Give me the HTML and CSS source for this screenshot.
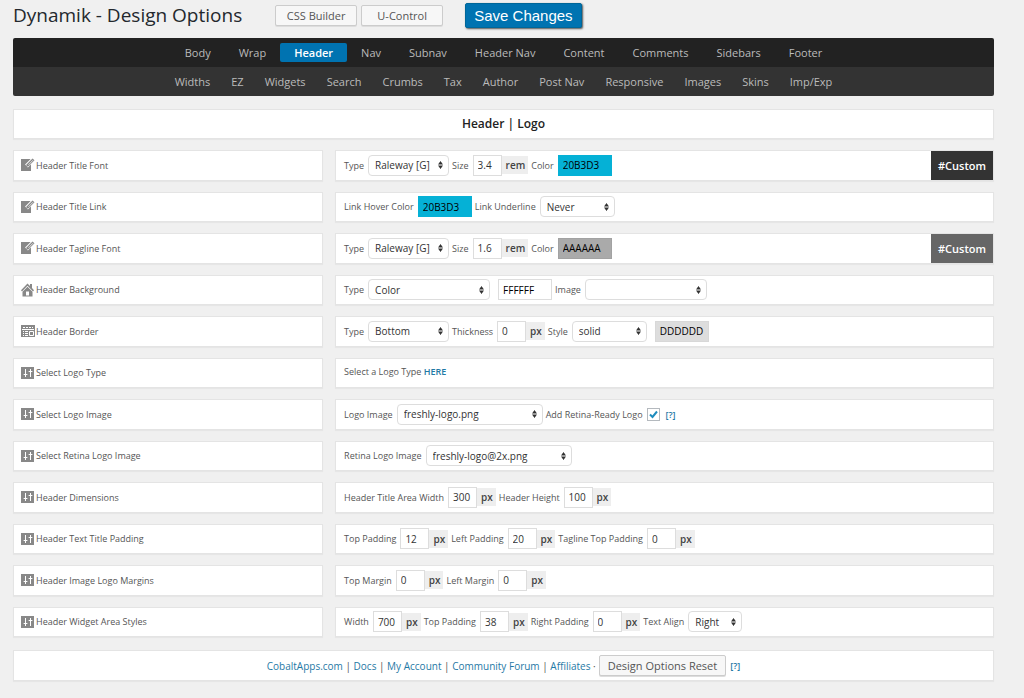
FILE: index.html
```html
<!DOCTYPE html>
<html lang="en">
<head>
    <meta charset="UTF-8">
    <meta name="viewport" content="width=device-width, initial-scale=1.0">
    <title>Dynamik - Design Options</title>
    <link rel="stylesheet" href="styles.css">
</head>
<body>

    <!-- Icons used in the option labels -->
    <svg class="icon-defs" aria-hidden="true">
        <symbol id="icon-edit" viewBox="0 0 14 14">
            <path d="M0 1h10v12H0z" />
            <path class="icon-gap" d="M5.5 8L13 0.5" />
            <path d="M5 9L5.8 6.3 11.5 0.5 13.5 2.2 7.8 8z" />
            <path class="icon-light" d="M7.5 6.8L12 2.2" />
        </symbol>
        <symbol id="icon-home" viewBox="0 0 14 14">
            <path d="M0 7.2L6.5 0.5 9 3V1h2v4L13 7.2l-1 1.2L6.5 2.8 1 8.4z" />
            <path fill-rule="evenodd" d="M6.5 3.8L11.5 8.8V13.500H1.5V8.8zM5 8.5V12.5h3V8.5z" />
        </symbol>
        <symbol id="icon-table" viewBox="0 0 14 14">
            <path d="M0 1h14v12H0z" />
            <path class="icon-line" d="M2 3.5h2M5 3.5h2M8 3.5h2M11 3.5h1M1 5.5h12M2 7.5h1M4 7.5h3M2 9.5h1M4 9.5h3M2 11.5h1M4 11.5h3M8.5 7.5h4v4h-4z" />
        </symbol>
        <symbol id="icon-sliders" viewBox="0 0 14 14">
            <path d="M0 1h13v12H0z" />
            <path class="icon-line" d="M4.5 3v8M3 8.5h3M9.5 3v8M8 5.5h3" />
            <path class="icon-light" d="M2 8.5h1M6 8.5h1M7 5.5h1M11 5.500h1" opacity=".5" />
        </symbol>
    </svg>

    <div class="page-header">
        <h1>Dynamik - Design Options</h1>
        <button type="button" class="button">CSS Builder</button>
        <button type="button" class="button">U-Control</button>
        <button type="submit" form="design-options" class="save-button">Save Changes</button>
    </div>

    <nav class="options-nav">
        <div class="nav-row nav-row-top">
            <a href="#body">Body</a>
            <a href="#wrap">Wrap</a>
            <a href="#header" class="active">Header</a>
            <a href="#nav">Nav</a>
            <a href="#subnav">Subnav</a>
            <a href="#header-nav">Header Nav</a>
            <a href="#content">Content</a>
            <a href="#comments">Comments</a>
            <a href="#sidebars">Sidebars</a>
            <a href="#footer">Footer</a>
        </div>
        <div class="nav-row nav-row-bottom">
            <a href="#widths">Widths</a>
            <a href="#ez">EZ</a>
            <a href="#widgets">Widgets</a>
            <a href="#search">Search</a>
            <a href="#crumbs">Crumbs</a>
            <a href="#tax">Tax</a>
            <a href="#author">Author</a>
            <a href="#post-nav">Post Nav</a>
            <a href="#responsive">Responsive</a>
            <a href="#images">Images</a>
            <a href="#skins">Skins</a>
            <a href="#imp-exp">Imp/Exp</a>
        </div>
    </nav>

    <h2 class="box section-title">Header | Logo</h2>

    <form id="design-options" class="options">
        <div class="option">
            <div class="box option-name"><svg class="icon"><use href="#icon-edit" /></svg>Header Title Font</div>
            <div class="box option-fields">
                <label for="title-type">Type</label>
                <select id="title-type" class="select-small"><option>Raleway [G]</option></select>
                <label for="title-size">Size</label>
                <span class="unit-field"><input type="text" id="title-size" class="number" value="3.4"><span class="unit">rem</span></span>
                <label for="title-color">Color</label>
                <input type="text" id="title-color" class="color color-blue" value="20B3D3">
                <button type="button" class="custom-button">#Custom</button>
            </div>
        </div>

        <div class="option">
            <div class="box option-name"><svg class="icon"><use href="#icon-edit" /></svg>Header Title Link</div>
            <div class="box option-fields">
                <label for="link-color">Link Hover Color</label>
                <input type="text" id="link-color" class="color color-blue" value="20B3D3">
                <label for="link-underline">Link Underline</label>
                <select id="link-underline" class="select-style"><option>Never</option></select>
            </div>
        </div>

        <div class="option">
            <div class="box option-name"><svg class="icon"><use href="#icon-edit" /></svg>Header Tagline Font</div>
            <div class="box option-fields">
                <label for="tagline-type">Type</label>
                <select id="tagline-type" class="select-small"><option>Raleway [G]</option></select>
                <label for="tagline-size">Size</label>
                <span class="unit-field"><input type="text" id="tagline-size" class="number" value="1.6"><span class="unit">rem</span></span>
                <label for="tagline-color">Color</label>
                <input type="text" id="tagline-color" class="color color-gray" value="AAAAAA">
                <button type="button" class="custom-button custom-button-light">#Custom</button>
            </div>
        </div>

        <div class="option">
            <div class="box option-name"><svg class="icon"><use href="#icon-home" /></svg>Header Background</div>
            <div class="box option-fields">
                <label for="bg-type">Type</label>
                <select id="bg-type" class="select-medium"><option>Color</option></select>
                <input type="text" class="color color-spaced" aria-label="Background color" value="FFFFFF">
                <label for="bg-image">Image</label>
                <select id="bg-image" class="select-medium"><option></option></select>
            </div>
        </div>

        <div class="option">
            <div class="box option-name"><svg class="icon"><use href="#icon-table" /></svg>Header Border</div>
            <div class="box option-fields">
                <label for="border-type">Type</label>
                <select id="border-type" class="select-small"><option>Bottom</option></select>
                <label for="border-thickness">Thickness</label>
                <span class="unit-field"><input type="text" id="border-thickness" class="number" value="0"><span class="unit">px</span></span>
                <label for="border-style">Style</label>
                <select id="border-style" class="select-style"><option>solid</option></select>
                <input type="text" class="color color-light color-spaced" aria-label="Border color" value="DDDDDD">
            </div>
        </div>

        <div class="option">
            <div class="box option-name"><svg class="icon"><use href="#icon-sliders" /></svg>Select Logo Type</div>
            <div class="box option-fields option-text">
                <p>Select a Logo Type <a href="#logo-type">HERE</a></p>
            </div>
        </div>

        <div class="option">
            <div class="box option-name"><svg class="icon"><use href="#icon-sliders" /></svg>Select Logo Image</div>
            <div class="box option-fields">
                <label for="logo-image">Logo Image</label>
                <select id="logo-image" class="select-large"><option>freshly-logo.png</option></select>
                <label for="retina-ready">Add Retina-Ready Logo</label>
                <input type="checkbox" id="retina-ready" checked>
                <a href="#retina-help" class="help">[?]</a>
            </div>
        </div>

        <div class="option">
            <div class="box option-name"><svg class="icon"><use href="#icon-sliders" /></svg>Select Retina Logo Image</div>
            <div class="box option-fields">
                <label for="retina-image">Retina Logo Image</label>
                <select id="retina-image" class="select-large"><option>freshly-logo@2x.png</option></select>
            </div>
        </div>

        <div class="option">
            <div class="box option-name"><svg class="icon"><use href="#icon-sliders" /></svg>Header Dimensions</div>
            <div class="box option-fields">
                <label for="title-width">Header Title Area Width</label>
                <span class="unit-field"><input type="text" id="title-width" class="number" value="300"><span class="unit">px</span></span>
                <label for="header-height">Header Height</label>
                <span class="unit-field"><input type="text" id="header-height" class="number" value="100"><span class="unit">px</span></span>
            </div>
        </div>

        <div class="option">
            <div class="box option-name"><svg class="icon"><use href="#icon-sliders" /></svg>Header Text Title Padding</div>
            <div class="box option-fields">
                <label for="title-top">Top Padding</label>
                <span class="unit-field"><input type="text" id="title-top" class="number" value="12"><span class="unit">px</span></span>
                <label for="title-left">Left Padding</label>
                <span class="unit-field"><input type="text" id="title-left" class="number" value="20"><span class="unit">px</span></span>
                <label for="tagline-top">Tagline Top Padding</label>
                <span class="unit-field"><input type="text" id="tagline-top" class="number" value="0"><span class="unit">px</span></span>
            </div>
        </div>

        <div class="option">
            <div class="box option-name"><svg class="icon"><use href="#icon-sliders" /></svg>Header Image Logo Margins</div>
            <div class="box option-fields">
                <label for="logo-top">Top Margin</label>
                <span class="unit-field"><input type="text" id="logo-top" class="number" value="0"><span class="unit">px</span></span>
                <label for="logo-left">Left Margin</label>
                <span class="unit-field"><input type="text" id="logo-left" class="number" value="0"><span class="unit">px</span></span>
            </div>
        </div>

        <div class="option">
            <div class="box option-name"><svg class="icon"><use href="#icon-sliders" /></svg>Header Widget Area Styles</div>
            <div class="box option-fields">
                <label for="widget-width">Width</label>
                <span class="unit-field"><input type="text" id="widget-width" class="number" value="700"><span class="unit">px</span></span>
                <label for="widget-top">Top Padding</label>
                <span class="unit-field"><input type="text" id="widget-top" class="number" value="38"><span class="unit">px</span></span>
                <label for="widget-right">Right Padding</label>
                <span class="unit-field"><input type="text" id="widget-right" class="number" value="0"><span class="unit">px</span></span>
                <label for="widget-align">Text Align</label>
                <select id="widget-align" class="select-align"><option>Right</option></select>
            </div>
        </div>
    </form>

    <footer class="box page-footer">
        <p>
            <a href="#cobaltapps">CobaltApps.com</a> |
            <a href="#docs">Docs</a> |
            <a href="#account">My Account</a> |
            <a href="#forum">Community Forum</a> |
            <a href="#affiliates">Affiliates</a> &middot;
        </p>
        <button type="button" class="button reset-button">Design Options Reset</button>
        <a href="#reset-help" class="help">[?]</a>
    </footer>

</body>
</html>
```
FILE: styles.css
```css
* {
    box-sizing: border-box;
}

body {
    display: flex;
    flex-direction: column;
    min-height: 100vh;
    margin: 0;
    padding: 2px 30px 17px 13px;
    background-color: #f0f0f0;
    color: #555;
    font-family: "Open Sans", sans-serif;
    font-size: 9px;
}

a {
    color: #1f79a5;
    text-decoration: none;
}

h1, h2, p {
    margin: 0;
}

button, input, select {
    margin: 0;
    font-family: inherit;
}

.icon-defs {
    position: absolute;
    width: 0;
    height: 0;
}

/* Page header */
.page-header {
    display: flex;
    align-items: center;
    height: 26px;
    margin-bottom: 10px;
}

h1 {
    margin-right: 33px;
    color: #23282d;
    font-size: 19px;
    font-weight: 400;
    line-height: 26px;
}

.button {
    min-width: 82px;
    height: 21px;
    margin-right: 4px;
    padding: 0 8px;
    border: 1px solid #ccc;
    border-radius: 2px;
    background-color: #f7f7f7;
    box-shadow: 0 1px 0 #ddd;
    color: #555;
    font-size: 11px;
    cursor: pointer;
}

.save-button {
    height: 25px;
    margin-left: 18px;
    padding: 0 8px;
    border: 1px solid #006799;
    border-radius: 2px;
    background-color: #0073b1;
    box-shadow: 1px 1px 2px #555;
    color: #fff;
    font-family: "Liberation Sans", Arial, sans-serif;
    font-size: 15px;
    cursor: pointer;
}

/* Navigation */
.options-nav {
    margin-bottom: 13px;
    border-radius: 2px;
    overflow: hidden;
}

.nav-row {
    display: flex;
    justify-content: center;
    align-items: center;
    height: 29px;
}

.nav-row a {
    padding: 0 14px;
    border-radius: 2px;
    color: #bbb;
    font-size: 11px;
    line-height: 19px;
}

.nav-row-top {
    background-color: #222;
}

.nav-row-bottom {
    gap: 1px;
    background-color: #333;
}

.nav-row-bottom a {
    padding: 0 10px;
}

.nav-row a.active {
    background-color: #0073b1;
    color: #fff;
    font-weight: 600;
}

/* White boxes */
.box {
    border: 1px solid #e4e4e4;
    background-color: #fff;
    box-shadow: 0 1px 1px rgba(0, 0, 0, 0.04);
}

.section-title {
    margin-bottom: 11px;
    color: #222;
    font-size: 12px;
    font-weight: 600;
    line-height: 28px;
    text-align: center;
}

/* Option rows share the height that is left in the window */
.options {
    display: flex;
    flex: 1;
    flex-direction: column;
    gap: 11px;
}

.option {
    display: grid;
    flex: 1;
    grid-template-columns: 32fr 68fr;
    gap: 12px;
    min-height: 30px;
}

.option-name,
.option-fields {
    display: flex;
    align-items: center;
}

.option-name {
    gap: 1px;
    padding-left: 7px;
}

.icon {
    width: 14px;
    height: 14px;
    fill: #888;
}

.icon-line,
.icon-light,
.icon-gap {
    fill: none;
    stroke: #fff;
}

.icon-light {
    stroke: #ddd;
}

.icon-gap {
    stroke-width: 4px;
}

.option-fields {
    gap: 3px;
    padding-left: 8px;
}

.option-fields label {
    margin-right: 1px;
}

.option-text {
    padding-bottom: 2px;
}

.option-text a {
    font-weight: 600;
}

.option-fields input,
.option-fields select {
    height: 21px;
    border: 1px solid #ddd;
    background-color: #fff;
    color: #333;
    font-size: 10px;
}

.option-fields select {
    appearance: none;
    padding: 0 6px;
    border-radius: 4px;
    background-image: url("data:image/svg+xml,%3Csvg xmlns='http://www.w3.org/2000/svg' width='5' height='8'%3E%3Cpath fill='%23333' d='M0 3.5L2.5 0 5 3.5zM0 4.5L2.5 8 5 4.5z'/%3E%3C/svg%3E");
    background-repeat: no-repeat;
    background-position: right 5px center;
}

.option-fields .select-small {
    width: 81px;
}

.option-fields .select-style {
    width: 75px;
}

.option-fields .select-medium {
    width: 122px;
}

.option-fields .select-large {
    width: 146px;
}

.option-fields .select-align {
    width: 54px;
}

.unit-field {
    display: flex;
    align-items: center;
}

.option-fields .number {
    width: 29px;
    padding: 0 4px;
}

.unit {
    padding: 0 3px 0 4px;
    background-color: #eee;
    color: #444;
    font-size: 10px;
    font-weight: 600;
    line-height: 18px;
}

.option-fields .color {
    width: 54px;
    padding: 0 4px;
    color: #000;
}

.option-fields .color-spaced {
    margin-left: 5px;
}

.option-fields .color-blue {
    border-color: #05b1d6;
    background-color: #05b1d6;
}

.option-fields .color-gray {
    border-color: #a2a2a2;
    background-color: #aaa;
}

.option-fields .color-light {
    border-color: #d8d8d8;
    background-color: #ddd;
}

.option-fields input[type="checkbox"] {
    appearance: none;
    width: 13px;
    height: 13px;
    border-color: #b4b9be;
    background: url("data:image/svg+xml,%3Csvg xmlns='http://www.w3.org/2000/svg' viewBox='0 0 11 11'%3E%3Cpath fill='none' stroke='%231e8cbe' stroke-width='2' d='M2 5.5L4.5 8 9 2.5'/%3E%3C/svg%3E") center no-repeat;
}

.help {
    font-size: 9px;
    font-weight: 600;
}

.option-fields .help {
    margin-left: 3px;
}

.custom-button {
    align-self: stretch;
    margin-left: auto;
    padding: 0 7px;
    border: 0;
    background-color: #333;
    color: #fff;
    font-size: 11px;
    font-weight: 600;
    cursor: pointer;
}

.custom-button-light {
    background-color: #666;
}

/* Footer */
.page-footer {
    display: flex;
    justify-content: center;
    align-items: center;
    height: 31px;
    margin-top: 13px;
    font-size: 10px;
}

.page-footer .reset-button {
    margin: 0 4px 0 3px;
}
```
